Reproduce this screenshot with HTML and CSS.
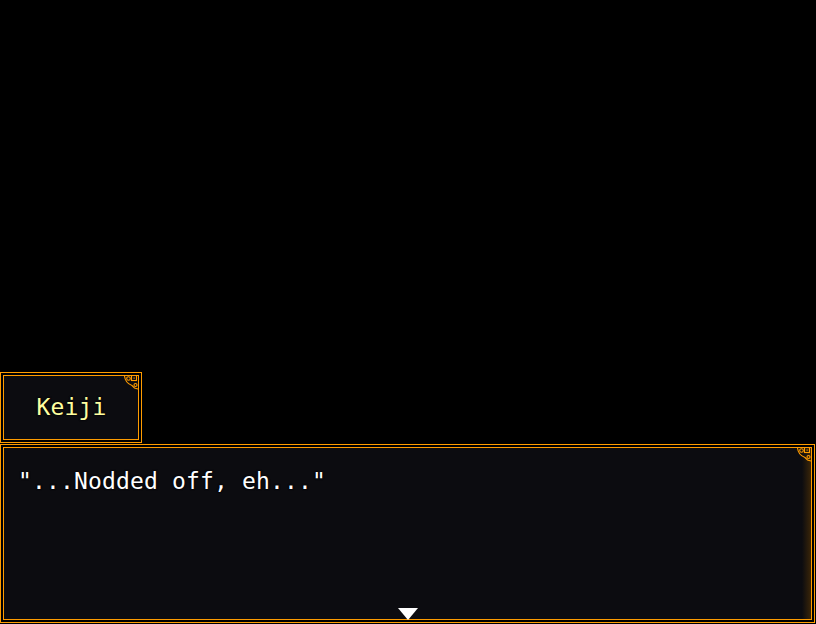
FILE: index.html
```html
<!DOCTYPE html>
<html>
<head>
<meta charset="utf-8">
<link rel="stylesheet" href="styles.css">
</head>
<body>
<div class="stage">
  <div class="namebox">
    <div class="inner name-inner">
      <svg class="orn" width="16" height="16" viewBox="0 0 16 16"><circle cx="6.5" cy="2.5" r="1.8"/><rect x="9.5" y="-0.5" width="5" height="5"/><rect x="11.5" y="1.5" width="1.2" height="1.2" class="dot"/><circle cx="13.5" cy="9" r="1.5"/><path d="M2.5 0 C3 5 6 8 10 9.5 L12.5 12 L16 13"/></svg>
      <span class="name">Keiji</span>
    </div>
  </div>
  <div class="dialog">
    <div class="inner dialog-inner">
      <svg class="orn" width="16" height="16" viewBox="0 0 16 16"><circle cx="6.5" cy="2.5" r="1.8"/><rect x="9.5" y="-0.5" width="5" height="5"/><rect x="11.5" y="1.5" width="1.2" height="1.2" class="dot"/><circle cx="13.5" cy="9" r="1.5"/><path d="M2.5 0 C3 5 6 8 10 9.5 L12.5 12 L16 13"/></svg>
      <p class="line">"...Nodded off, eh..."</p>
      <div class="more"></div>
    </div>
  </div>
</div>
</body>
</html>
```
FILE: styles.css
```css
html, body {
  margin: 0;
  padding: 0;
  background: #000;
}
.stage {
  width: 816px;
  height: 624px;
  display: flex;
  flex-direction: column;
  justify-content: flex-end;
  padding-bottom: 1px;
  box-sizing: border-box;
  font-family: "DejaVu Sans Mono", monospace;
  font-size: 23px;
  letter-spacing: 0.15px;
}
.namebox {
  width: 142px;
  height: 71px;
  box-sizing: border-box;
  border: 1px solid #ff9c00;
  padding: 2px;
  background: #000;
  margin-bottom: 1px;
}
.dialog {
  width: 815px;
  height: 179px;
  box-sizing: border-box;
  border: 1px solid #ff9c00;
  padding: 2px;
  background: #000;
}
.inner {
  position: relative;
  height: 100%;
  box-sizing: border-box;
  border: 1px solid #ff9c00;
  background: #0c0c10;
}
.name-inner {
  display: flex;
  align-items: center;
  justify-content: center;
}
.dialog-inner {
  padding: 20px 14px 0 14px;
  background: linear-gradient(to right, #0c0c10 0, #0c0c10 calc(100% - 9px), #3a2508 100%);
}
.name {
  color: #ffffa0;
  text-shadow: 0 0 2px #000, 0 0 2px #000;
  margin-top: -1px;
  padding-left: 1px;
}
.line {
  margin: 0;
  color: #fff;
  line-height: normal;
  text-shadow: 0 0 2px #000, 0 0 2px #000;
}
.orn {
  position: absolute;
  top: 0;
  right: 0;
  fill: none;
  stroke: #ff9c00;
  stroke-width: 1.1;
}
.orn .dot {
  fill: #ff9c00;
  stroke: none;
}
.more {
  position: absolute;
  left: 394px;
  bottom: -1px;
  width: 0;
  height: 0;
  border-left: 10px solid transparent;
  border-right: 10px solid transparent;
  border-top: 12px solid #fff;
}
```
